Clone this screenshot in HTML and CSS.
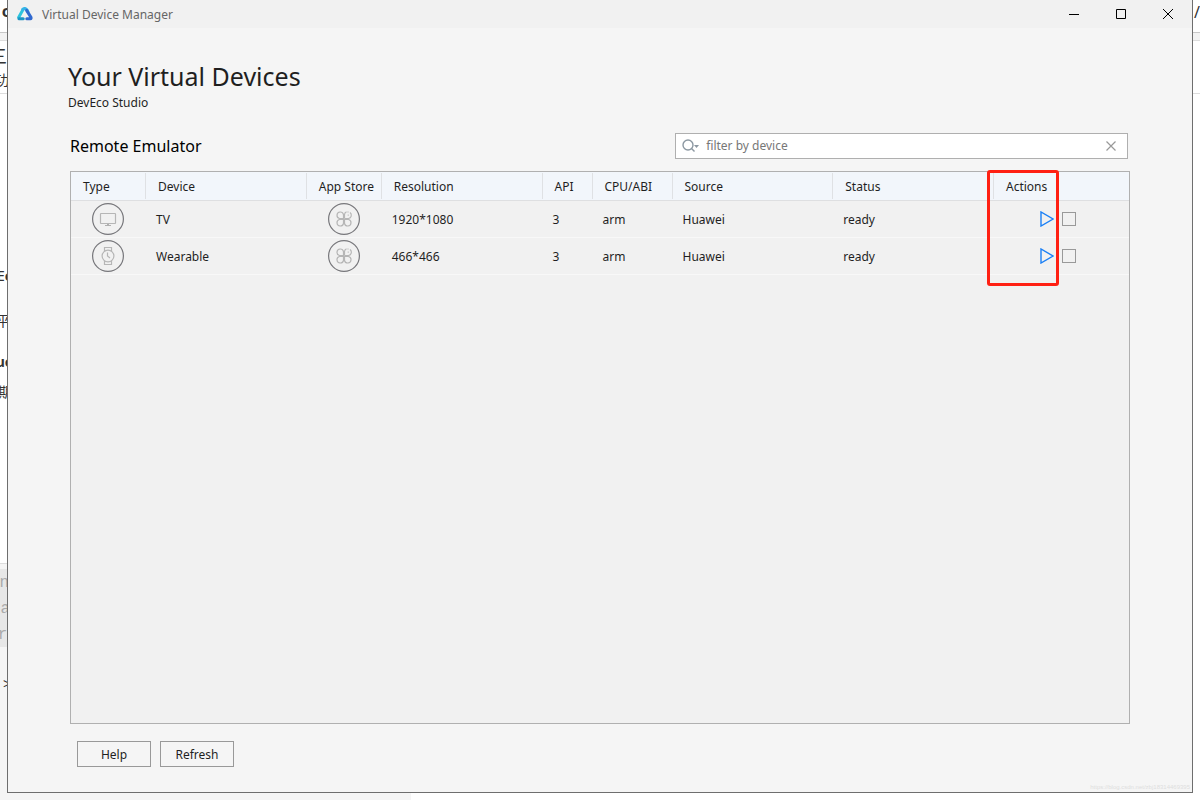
FILE: index.html
```
<!DOCTYPE html>
<html lang="en">
<head>
<meta charset="utf-8">
<title>Virtual Device Manager</title>
<link rel="stylesheet" href="styles.css">
</head>
<body>
<svg class="defs" aria-hidden="true">
  <symbol id="store" viewBox="0 0 32 32">
    <circle class="ring" cx="16" cy="16" r="15.4"/>
    <path class="glyph" d="M15.500 15.500h-4a3.300 3.300 0 1 1 4-4zM15.500 16.500h-4a3.300 3.300 0 1 0 4 4zM16.500 16.500h4a3.300 3.300 0 1 1-4 4zM16.500 15.500v-4a3.300 3.300 0 0 1 2-2.800M22 9.600a3.300 3.300 0 0 1-1.500 5.900h-4M20 8.500v1M19.700 12.200h1"/>
  </symbol>
  <symbol id="play" viewBox="0 0 14 16">
    <path class="play-shape" d="M1 1v14L13 8z"/>
  </symbol>
</svg>

<div class="backdrop" aria-hidden="true">
  <div class="band band-top"></div>
  <div class="band band-menu"></div>
  <div class="band band-tools"></div>
  <div class="band band-page"></div>
  <div class="band band-gap"></div>
  <div class="band band-code"></div>
  <div class="band band-foot"></div>
  <span class="scrap bold s1">c</span>
  <span class="scrap s2">三</span>
  <span class="scrap s3">功</span>
  <span class="scrap s4">E<b>c</b></span>
  <span class="scrap s5">平</span>
  <span class="scrap bold s6">uc</span>
  <span class="scrap s7">期</span>
  <span class="scrap faint s8">n</span>
  <span class="scrap faint s9">a</span>
  <span class="scrap faint s10">r_</span>
  <span class="scrap s11">&gt;</span>
  <span class="scrap s12">/</span>
</div>

<main class="window">
  <header class="titlebar">
    <svg class="logo" viewBox="0 0 16 14">
      <path d="M6.2 2.2 1.6 10.4" stroke="#2cc3dc"/>
      <path d="M2 11.7h4.2" stroke="#1d93c4"/>
      <path d="M5.8 2.4Q8 .2 10.2 3.2L11 4.8" stroke="#35b5e8"/>
      <path d="M9.6 3.4 14 10.4Q14.4 11.7 13.4 11.7H9.8" stroke="#3169cf"/>
    </svg>
    <span class="caption">Virtual Device Manager</span>
    <div class="controls">
      <button type="button" aria-label="Minimize"><svg viewBox="0 0 12 12"><path d="M1 6.5h10"/></svg></button>
      <button type="button" aria-label="Maximize"><svg viewBox="0 0 12 12"><path d="M1.5 1.5h9v9h-9z"/></svg></button>
      <button type="button" aria-label="Close"><svg viewBox="0 0 12 12"><path d="m1 1 10 10M11 1 1 11"/></svg></button>
    </div>
  </header>

  <div class="content">
    <h1>Your Virtual Devices</h1>
    <p class="product">DevEco Studio</p>
    <div class="toolbar">
      <h2>Remote Emulator</h2>
      <div class="search">
        <svg class="lens" viewBox="0 0 17 14"><circle cx="6" cy="6" r="5"/><path d="m9.5 9.5 3 3"/><path class="arrow" d="M12 6h5l-2.5 3z"/></svg>
        <input type="text" placeholder="filter by device" aria-label="Filter by device">
        <button type="button" aria-label="Clear filter"><svg viewBox="0 0 10 10"><path d="m.5.5 9 9M9.5.5l-9 9"/></svg></button>
      </div>
    </div>

    <section class="grid">
      <table>
        <colgroup><col class="c-icon"><col><col class="c-icon"><col><col class="c-api"><col class="c-cpu"><col><col><col class="c-actions"></colgroup>
        <thead>
          <tr><th>Type</th><th>Device</th><th>App Store</th><th>Resolution</th><th>API</th><th>CPU/ABI</th><th>Source</th><th>Status</th><th>Actions</th></tr>
        </thead>
        <tbody>
          <tr>
            <td class="icon"><svg viewBox="0 0 32 32" role="img" aria-label="TV"><circle class="ring" cx="16" cy="16" r="15.4"/><rect class="glyph" x="8.5" y="10.5" width="15" height="10" rx=".5"/><path class="base" d="M15 21h2v1h2v1h-6v-1h2z"/></svg></td>
            <td>TV</td>
            <td class="icon"><svg role="img" aria-label="App store"><use href="#store"/></svg></td>
            <td>1920*1080</td><td>3</td><td>arm</td><td>Huawei</td><td>ready</td>
            <td class="tools"><div class="actions"><button type="button" aria-label="Start TV"><svg><use href="#play"/></svg></button><input type="checkbox" aria-label="Select TV"></div></td>
          </tr>
          <tr>
            <td class="icon"><svg viewBox="0 0 32 32" role="img" aria-label="Wearable"><circle class="ring" cx="16" cy="16" r="15.4"/><circle class="glyph" cx="16" cy="16" r="5.9"/><path class="glyph" d="M12.5 11V7.5h7V11M12.5 21v3.500h7V21M15.500 12.500v3.500l2.500 2"/></svg></td>
            <td>Wearable</td>
            <td class="icon"><svg role="img" aria-label="App store"><use href="#store"/></svg></td>
            <td>466*466</td><td>3</td><td>arm</td><td>Huawei</td><td>ready</td>
            <td class="tools"><div class="actions"><button type="button" aria-label="Start Wearable"><svg><use href="#play"/></svg></button><input type="checkbox" aria-label="Select Wearable"></div></td>
          </tr>
        </tbody>
      </table>
      <div class="highlight"></div>
    </section>

    <footer>
      <button type="button">Help</button>
      <button type="button">Refresh</button>
    </footer>
  </div>
  <div class="watermark">https://blog.csdn.net/zbj18314469395</div>
</main>
</body>
</html>
```
FILE: styles.css
```
* { box-sizing: border-box; }
body {
  margin: 0;
  height: 100vh;
  position: relative;
  overflow: hidden;
  background: #fff;
  color: #1f1f1f;
  font: 12px/16px "Noto Sans", "Noto Sans CJK SC", sans-serif;
}
button, input { font: inherit; color: inherit; margin: 0; }
button { padding: 0; border: 0; background: none; }
.defs { position: absolute; width: 0; height: 0; }

/* document behind the window */
.backdrop { height: 100%; display: flex; flex-direction: column; }
.band { flex: none; }
.band-top { height: 33px; border-bottom: 1px solid #c8c8c8; }
.band-menu { height: 8px; background: #f3f3f3; border-bottom: 1px solid #ddd; }
.band-tools { height: 53px; border-bottom: 1px solid #ddd; }
.band-page { width: 411px; height: 470px; border-bottom: 1px solid #ddd; }
.band-gap, .band-code, .band-foot { width: 411px; background: #f5f5f5; }
.band-gap { height: 5px; }
.band-code { height: 78px; background: #e7e7e7; }
.band-foot { flex: 1; }
.scrap { position: absolute; right: calc(100% - 9px); font-size: 14px; line-height: 20px; color: #333; white-space: nowrap; }
.bold { font-weight: 700; }
.faint { color: #aaa; font-family: "Liberation Mono", monospace; font-size: 16px; }
.s1 { top: 1px; right: calc(100% - 10px); font-size: 16px; }
.s2 { top: 46px; right: calc(100% - 7px); font-size: 18px; }
.s3 { top: 70px; }
.s4 { top: 266px; right: calc(100% - 12px); }
.s5 { top: 311px; right: calc(100% - 10px); }
.s6 { top: 352px; right: calc(100% - 12px); }
.s7 { top: 382px; right: calc(100% - 12px); }
.s8 { top: 573px; }
.s9 { top: 599px; right: calc(100% - 10px); }
.s10 { top: 625px; right: calc(100% - 17px); }
.s11 { top: 674px; right: calc(100% - 11px); }
.s12 { top: 2px; right: 0; font-size: 16px; }

/* window */
.window {
  position: absolute;
  inset: 0 7px 7px;
  display: flex;
  flex-direction: column;
  background: #f5f5f5;
  border: 1px solid #6e6e6e;
  border-top: 0;
}
.titlebar { display: flex; align-items: center; height: 28px; padding: 0 1px 0 9px; background: #f1f1f1; color: #666; }
.logo { width: 16px; height: 14px; margin-right: 9px; fill: none; stroke-width: 3; stroke-linecap: round; stroke-linejoin: round; }
.caption { padding-top: 2px; }
.controls { display: flex; margin-left: auto; }
.controls button { width: 47px; height: 28px; display: grid; place-items: center; }
.controls svg { width: 12px; height: 12px; fill: none; stroke: #000; }

.content { flex: 1; display: flex; flex-direction: column; padding: 32px 62px 25px; }
h1, h2, p { margin: 0; font-weight: 400; }
h1 { margin-left: -2px; font-size: 25px; line-height: 32px; }
.product { margin: 2px 0 0 -2px; line-height: 18px; }
.toolbar { display: flex; align-items: center; justify-content: space-between; margin-top: 21px; padding-right: 2px; }
h2 { font-size: 16px; line-height: 24px; color: #000; }
.search { display: flex; align-items: center; width: 42.8%; height: 26px; padding: 0 11px 0 6px; background: #fff; border: 1px solid #afafaf; }
.lens { width: 17px; height: 14px; margin-right: 7px; fill: none; stroke: #8c98a2; stroke-width: 1.4; }
.arrow { fill: #8c98a2; stroke: none; }
.search input { flex: 1; min-width: 0; padding: 0; border: 0; outline: 0; background: none; }
.search input::placeholder { color: #777; opacity: 1; }
.search button { display: grid; }
.search button svg { width: 10px; height: 10px; stroke: #999; stroke-width: 1.2; }

.grid { flex: 1; position: relative; margin-top: 12px; background: #f1f1f1; border: 1px solid #b0b0b0; }
table { width: 100%; table-layout: fixed; border-collapse: separate; border-spacing: 0; }
.c-icon { width: 75px; }
.c-api { width: 50px; }
.c-cpu { width: 80px; }
.c-actions { width: 135px; }
th {
  height: 29px;
  padding: 2px 0 0 12px;
  text-align: left;
  font-weight: 400;
  white-space: nowrap;
  background: #f2f6fb linear-gradient(#dfe1e4, #dfe1e4) no-repeat right 1px / 1px 26px;
  border-bottom: 1px solid #dedfe1;
}
th:last-child { background-image: none; }
td { height: 37px; padding: 2px 0 0 10px; border-bottom: 1px solid #f8f8f8; }
td.icon { padding: 0 1px 0 0; }
td.tools { padding: 0 0 0 46px; }
.icon svg { display: block; width: 32px; height: 32px; margin: 0 auto; }
.ring { fill: none; stroke: #77777b; stroke-width: 1.2; }
.glyph { fill: none; stroke: #b6b6b6; stroke-width: 1.2; }
.base { fill: #b0b0b0; }
.actions { display: flex; align-items: center; gap: 8px; }
.actions button, .actions button svg { display: block; width: 14px; height: 16px; }
.play-shape { fill: none; stroke: #1b80f5; stroke-width: 1.4; }
.actions input { appearance: none; width: 14px; height: 14px; border: 1px solid #999; }
.highlight { position: absolute; top: -2px; right: 70px; width: 72px; height: 116px; border: 3px solid #ff2013; border-radius: 3px; pointer-events: none; }

footer { display: flex; gap: 9px; margin: 17px 0 0 7px; }
footer button { width: 74px; height: 26px; padding-top: 1px; border: 1px solid #999; }
.watermark { position: absolute; right: 2px; bottom: 0; font: 6px/10px "Liberation Sans", sans-serif; color: #dedede; }
```
